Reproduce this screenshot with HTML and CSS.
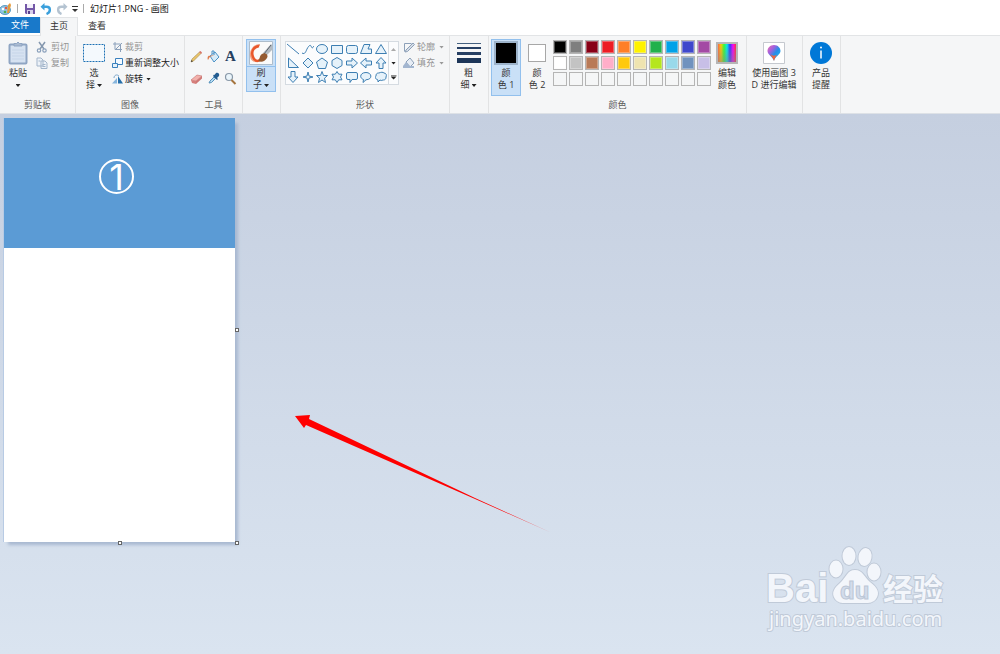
FILE: index.html
```html
<!DOCTYPE html>
<html lang="zh-CN">
<head>
<meta charset="utf-8">
<title>幻灯片1.PNG - 画图</title>
<link rel="stylesheet" href="styles.css">
</head>
<body>
<div class="app">
  <header class="titlebar">
    <svg class="app-icon" width="12" height="14" viewBox="0 0 12 14"><ellipse cx="5" cy="8" rx="5.500" ry="4.500" fill="#8fc3e2" stroke="#5c9cc5"/><circle cx="3" cy="7" r="1.200" fill="#fff"/><circle cx="5" cy="10" r="1.300" fill="#4caf50"/><circle cx="6" cy="6" r="1.200" fill="#e25545"/><path d="M7 11 8 3l2-2 1 2-2 8z" fill="#e59a3c"/></svg>
    <span class="bar"></span>
    <button class="quick" aria-label="保存"><svg width="12" height="12" viewBox="0 0 12 12"><path d="M1 1h10v10H2L1 10z" fill="#7458a8"/><path d="M3 1h6v4H3z" fill="#f3f0fa"/><path d="M3 7h6v4H3z" fill="#d8d0ea"/><path d="M4 8h2v3H4z" fill="#59408d"/></svg></button>
    <button class="quick" aria-label="撤销"><svg width="12" height="12" viewBox="0 0 12 12"><path d="M4.500 0v7.500L.5 3.800z" fill="#3ba0dc"/><path d="M3 3.800h3.500c4.500 0 4.500 5.500 0 7.200" fill="none" stroke="#3ba0dc" stroke-width="2.400"/></svg></button>
    <button class="quick" aria-label="重做"><svg width="12" height="12" viewBox="0 0 12 12"><path d="M7.500 0v7.500l4-3.700z" fill="#b4c3d1"/><path d="M9 3.800H5.500C1 3.800 1 9.300 5.500 11" fill="none" stroke="#b4c3d1" stroke-width="2.400"/></svg></button>
    <button class="quick narrow" aria-label="自定义"><svg width="6" height="7" viewBox="0 0 6 7"><path d="M0 1.500h6" stroke="#333"/><path d="M0 4h6L3 7z" fill="#333"/></svg></button>
    <span class="bar"></span>
    <h1 class="title">幻灯片1.PNG - 画图</h1>
  </header>
  <nav class="tabs">
    <button class="tab file">文件</button>
    <button class="tab active">主页</button>
    <button class="tab">查看</button>
  </nav>
  <section class="ribbon">
    <div class="group">
      <div class="body">
        <button class="large"><span class="pic"><svg width="20" height="24" viewBox="0 0 20 24"><rect x="1.500" y="3.500" width="17" height="19" rx="1" fill="#d6e2f1" stroke="#8fa5c3" stroke-width="2"/><path d="M6 5V2.500h2.500L10 1l1.500 1.500H14V5z" fill="#a9bad1" stroke="#8fa5c3"/><path d="M4 9h12M4 12h12M4 15h12M4 18h12" stroke="#c6d5e8"/></svg></span>粘贴<i class="caret"></i></button>
        <div class="stack clip">
          <button class="small off"><svg width="12" height="12" viewBox="0 0 12 12"><path d="M3 1 8 8M9 1 4 8" stroke="#8497ae" stroke-width="1.500"/><circle cx="3" cy="9.500" r="1.700" fill="none" stroke="#8aa0bb" stroke-width="1.200"/><circle cx="8.500" cy="9.500" r="1.700" fill="none" stroke="#8aa0bb" stroke-width="1.200"/></svg>剪切</button>
          <button class="small off"><svg width="12" height="12" viewBox="0 0 12 12"><path d="M1 1h4l2 2v6H1zM5 4h4l2 2v5.500H5z" fill="#edf2f8" stroke="#a3b5ca"/><path d="M6.500 7.500h3M6.500 9.500h3M2.500 4h2" stroke="#a3b5ca"/></svg>复制</button>
        </div>
      </div>
      <div class="label">剪贴板</div>
    </div>
    <div class="group">
      <div class="body">
        <button class="large"><span class="pic"><svg width="22" height="18" viewBox="0 0 22 18"><rect x=".5" y=".5" width="21" height="17" fill="#f4f9fd" stroke="#1c70b4" stroke-dasharray="2 1"/></svg></span>选<span>择<i class="caret"></i></span></button>
        <div class="stack">
          <button class="small off"><svg width="12" height="12" viewBox="0 0 12 12"><path d="M3 1v7.500h7M1 3h7.500V11M4 8l6-6" fill="none" stroke="#8ba0ba"/></svg>裁剪</button>
          <button class="small"><svg width="12" height="12" viewBox="0 0 12 12"><path d="M3.500 1.500h7v6h-7z" fill="#f5faff" stroke="#3a80bd"/><path d="M.5 6.500h5v4h-5z" fill="#e4f1fb" stroke="#3a80bd"/></svg>重新调整大小</button>
          <button class="small"><svg width="12" height="12" viewBox="0 0 12 12"><path d="M0 10.500 5 5v5.500z" fill="#86b5dd"/><path d="M6 3v7.500h5z" fill="#246eaa"/><path d="M2 5c0-3 3-4 5-2" fill="none" stroke="#7ca7cb"/></svg>旋转<i class="caret"></i></button>
        </div>
      </div>
      <div class="label">图像</div>
    </div>
    <div class="group">
      <div class="body tools">
        <button aria-label="铅笔"><svg width="13" height="13" viewBox="0 0 13 13"><path d="m1 12 1-3 7.500-7 1.500 1.500L3.500 11z" fill="#e9c46a" stroke="#a38a52" stroke-width=".6"/><path d="m9 2 1.500-1L12 2.500 11 4z" fill="#d9746a"/><path d="m1 12 .6-2L3 11.300z" fill="#333"/></svg></button>
        <button aria-label="填充"><svg width="13" height="13" viewBox="0 0 13 13"><path d="m3 6 5-4 4 5-5 5z" fill="#d7ebf8" stroke="#4a91c6"/><path d="M3 6C1 5 0 8 1 10c1-1 1-3 3-3.500l4-2z" fill="#dd7a4b"/><path d="M5 4V1h2v4" fill="none" stroke="#4a91c6"/></svg></button>
        <button class="letter" aria-label="文本">A</button>
        <button aria-label="橡皮擦"><svg width="13" height="13" viewBox="0 0 13 13"><path d="m1 8 6-5 5 1-6 5z" fill="#f2b0ab" stroke="#c6736f" stroke-width=".6"/><path d="m1 8 5 1v3l-4-1z" fill="#d67f7c"/><path d="m6 9 6-5v2.500L6 12z" fill="#cf7875"/></svg></button>
        <button aria-label="颜色选取器"><svg width="13" height="13" viewBox="0 0 13 13"><path d="m2 11 1-2 4-4 1.500 1.500-4 4z" fill="#b6dcf2" stroke="#5692bc"/><path d="m6 4 4 4 1-1-1-1 2-2c1-2-1-4-3-3L7.500 3 7 2.500z" fill="#245d91"/></svg></button>
        <button aria-label="放大镜"><svg width="13" height="13" viewBox="0 0 13 13"><circle cx="5" cy="5" r="3.500" fill="#eaf5fb" stroke="#8898a8" stroke-width="1.200"/><path d="m7.500 8 4 4" stroke="#a4743f" stroke-width="2"/></svg></button>
      </div>
      <div class="label">工具</div>
    </div>
    <div class="group">
      <div class="body brush">
        <button class="large selected split"><span class="pic"><svg width="24" height="24" viewBox="0 0 24 24"><path d="M.5.5h23v23H.5z" fill="#fafafa" stroke="#aebdcb"/><path d="M11 4C5 4 1 10 2 15c1 6 7 7 11 2" fill="none" stroke="#f0a184" stroke-width="2"/><path d="M10 5C4 6 2 11 4 16c2 5 6 5 9 1" fill="none" stroke="#e9572b" stroke-width="2.500"/><path d="m14 12 8-9 1 1v5l-6 6z" fill="#b4bbc2"/><path d="m22 4-7 9" stroke="#5d656d"/><path d="M9 20c2-1 1-5 4-7s7 1 5 4-5 5-9 3z" fill="#955b32"/></svg></span>刷<span>子<i class="caret"></i></span></button>
      </div>
    </div>
    <div class="group">
      <div class="body shapes">
        <div class="gallery">
          <div class="grid">
            <button aria-label="直线"><svg viewBox="0 0 12 12"><path d="m0 1 12 10"/></svg></button>
            <button aria-label="曲线"><svg viewBox="0 0 12 12"><path fill="none" d="M0 10c3 2 4-2 5-4s3-5 4-3 1 3 3 0"/></svg></button>
            <button aria-label="椭圆"><svg viewBox="0 0 12 12"><ellipse cx="6" cy="6" rx="5.500" ry="4.500"/></svg></button>
            <button aria-label="矩形"><svg viewBox="0 0 12 12"><path d="M.5 2.500h11v8H.5z"/></svg></button>
            <button aria-label="圆角矩形"><svg viewBox="0 0 12 12"><rect x=".5" y="2.500" width="11" height="8" rx="2"/></svg></button>
            <button aria-label="多边形"><svg viewBox="0 0 12 12"><path d="M.5 10.500 4 1.500h6L8 6h3.500v4.500z"/></svg></button>
            <button aria-label="三角形"><svg viewBox="0 0 12 12"><path d="m6 1.500 5.500 9H.5z"/></svg></button>
            <button aria-label="直角三角形"><svg viewBox="0 0 12 12"><path d="M1.500 1v9.500h10z"/></svg></button>
            <button aria-label="菱形"><svg viewBox="0 0 12 12"><path d="m6 1 5 5-5 5-5-5z"/></svg></button>
            <button aria-label="五边形"><svg viewBox="0 0 12 12"><path d="m6 1 5.500 4-2 6.500h-7L.5 5z"/></svg></button>
            <button aria-label="六边形"><svg viewBox="0 0 12 12"><path d="m6 .5 5 3v5l-5 3-5-3v-5z"/></svg></button>
            <button aria-label="右箭头"><svg viewBox="0 0 12 12"><path d="M.5 4H6V1l5.500 5L6 11V8H.5z"/></svg></button>
            <button aria-label="左箭头"><svg viewBox="0 0 12 12"><path d="M11.500 4H6V1L.5 6 6 11V8h5.500z"/></svg></button>
            <button aria-label="上箭头"><svg viewBox="0 0 12 12"><path d="M4 11.500V6H1L6 .5 11 6H8v5.500z"/></svg></button>
            <button aria-label="下箭头"><svg viewBox="0 0 12 12"><path d="M4 .5V6H1l5 5.500L11 6H8V.5z"/></svg></button>
            <button aria-label="四角星"><svg viewBox="0 0 12 12"><path d="m6 1 1 4 4 1-4 1-1 4-1-4-4-1 4-1z"/></svg></button>
            <button aria-label="五角星"><svg viewBox="0 0 12 12"><path d="m6 .5 1.500 4h4l-3 2.700 1 4.300L6 9l-3.500 2.500 1-4.300-3-2.700h4z"/></svg></button>
            <button aria-label="六角星"><svg viewBox="0 0 12 12"><path d="m6 .5 1.700 2.700H11L9.500 6 11 8.800H7.700L6 11.500 4.300 8.800H1L2.500 6 1 3.200h3.300z"/></svg></button>
            <button aria-label="圆角标注"><svg viewBox="0 0 12 12"><path d="M2 1.500h8q1.500 0 1.500 1.500v4q0 1.500-1.500 1.500H6l-2 3v-3H2Q.5 8.500.5 7V3Q.5 1.500 2 1.500z"/></svg></button>
            <button aria-label="椭圆标注"><svg viewBox="0 0 12 12"><path d="M3.500 8.500C-1 7 0 1.500 6 1.500s7 7 0 7.300L3 11.500z"/></svg></button>
            <button aria-label="云形标注"><svg viewBox="0 0 12 12"><path d="M3 9C0 8 0 6 1 5c0-3 2-3 3-3 2-1 4-1 5 0 2 0 3 2 2 4 0 3-2 3-3 3q-2 1-3 0l-2 2z"/></svg></button>
          </div>
          <div class="scroll">
            <button aria-label="向上"><i class="caret up"></i></button>
            <button aria-label="向下"><i class="caret"></i></button>
            <button aria-label="更多"><i class="caret more"></i></button>
          </div>
        </div>
        <div class="stack outline">
          <button class="small off"><svg width="12" height="12" viewBox="0 0 12 12"><path d="M1.500 10.500v-8h7" fill="none" stroke="#8ca0b8"/><path d="m3 9 7-7 1.500 1.500-7 7L2 11z" fill="#d6dde6" stroke="#8ca0b8"/></svg>轮廓<i class="caret"></i></button>
          <button class="small off"><svg width="12" height="12" viewBox="0 0 12 12"><path d="m3 5 4-4 4 5-4 4z" fill="#e7edf5" stroke="#8ca0b8"/><path d="M3 5 0 9v2h11V9H7L4 6z" fill="#a3b6d0"/></svg>填充<i class="caret"></i></button>
        </div>
      </div>
      <div class="label">形状</div>
    </div>
    <div class="group">
      <div class="body brush">
        <button class="large wide"><span class="pic"><svg width="24" height="22" viewBox="0 0 24 22"><path d="M0 1.500h24" stroke="#44607f"/><path d="M0 6h24" stroke="#263f63" stroke-width="2"/><path d="M0 11.500h24" stroke="#263f63" stroke-width="3"/><path d="M0 18.500h24" stroke="#1c3558" stroke-width="5"/></svg></span>粗<span>细<i class="caret"></i></span></button>
      </div>
    </div>
    <div class="group">
      <div class="body colors">
        <button class="large selected tall"><span class="pic"><span class="chip black"></span></span>颜<span>色 1</span></button>
        <button class="large"><span class="pic"><span class="chip"></span></span>颜<span>色 2</span></button>
        <div class="palette">
          <button class="swatch" style="background:#000000" aria-label="黑色"></button><button class="swatch" style="background:#7f7f7f" aria-label="灰色-50%"></button><button class="swatch" style="background:#880015" aria-label="深红色"></button><button class="swatch" style="background:#ed1c24" aria-label="红色"></button><button class="swatch" style="background:#ff7f27" aria-label="橙色"></button><button class="swatch" style="background:#fff200" aria-label="黄色"></button><button class="swatch" style="background:#22b14c" aria-label="绿色"></button><button class="swatch" style="background:#00a2e8" aria-label="青绿色"></button><button class="swatch" style="background:#3f48cc" aria-label="靛蓝色"></button><button class="swatch" style="background:#a349a4" aria-label="紫色"></button>
          <button class="swatch" style="background:#ffffff" aria-label="白色"></button><button class="swatch" style="background:#c3c3c3" aria-label="灰色-25%"></button><button class="swatch" style="background:#b97a57" aria-label="褐色"></button><button class="swatch" style="background:#ffaec9" aria-label="玫瑰色"></button><button class="swatch" style="background:#ffc90e" aria-label="金色"></button><button class="swatch" style="background:#efe4b0" aria-label="浅黄色"></button><button class="swatch" style="background:#b5e61d" aria-label="酸橙色"></button><button class="swatch" style="background:#99d9ea" aria-label="淡青绿色"></button><button class="swatch" style="background:#7092be" aria-label="蓝灰色"></button><button class="swatch" style="background:#c8bfe7" aria-label="淡紫色"></button>
          <button class="swatch" aria-label="自定义 1"></button><button class="swatch" aria-label="自定义 2"></button><button class="swatch" aria-label="自定义 3"></button><button class="swatch" aria-label="自定义 4"></button><button class="swatch" aria-label="自定义 5"></button><button class="swatch" aria-label="自定义 6"></button><button class="swatch" aria-label="自定义 7"></button><button class="swatch" aria-label="自定义 8"></button><button class="swatch" aria-label="自定义 9"></button><button class="swatch" aria-label="自定义 10"></button>
        </div>
        <button class="large"><span class="pic"><span class="spectrum"></span></span>编辑<span>颜色</span></button>
      </div>
      <div class="label">颜色</div>
    </div>
    <div class="group">
      <div class="body brush">
        <button class="large extra"><span class="pic"><svg width="22" height="22" viewBox="0 0 22 22"><defs><linearGradient id="drop" x1="0" y1="0" x2="1" y2="1"><stop offset="0" stop-color="#ee6fb0"/><stop offset=".3" stop-color="#a660dc"/><stop offset=".55" stop-color="#268ee8"/><stop offset="1" stop-color="#20c4ec"/></linearGradient></defs><path d="M.5.5h21v21H.5z" fill="#fff" stroke="#c5c9cf"/><path d="M11 3c-4 0-6.500 3-6.500 6 0 4 5 5 6.500 10 1-5 6.500-6 6.500-10 0-3-2.500-6-6.500-6z" fill="url(#drop)"/><path d="M7 12c2 2 4 2 7 1-2 2-2 3-3 6-1-3-2-4-4-7z" fill="#f4643c"/></svg></span>使用画图 3<span>D 进行编辑</span></button>
      </div>
    </div>
    <div class="group">
      <div class="body brush">
        <button class="large"><span class="pic"><svg width="22" height="22" viewBox="0 0 22 22"><circle cx="11" cy="11" r="11" fill="#0078d7"/><path d="M11 8.500v8" stroke="#fff" stroke-width="1.500"/><circle cx="11" cy="5.500" r="1" fill="#fff"/></svg></span>产品<span>提醒</span></button>
      </div>
    </div>
  </section>
  <main class="workspace">
    <div class="paper">
      <div class="banner"><span class="number">1</span></div>
      <span class="handle right"></span>
      <span class="handle bottom"></span>
      <span class="handle corner"></span>
    </div>
    <svg class="arrow" width="258" height="120" viewBox="0 0 258 120"><defs><linearGradient id="tail" gradientUnits="userSpaceOnUse" x1="220" y1="0" x2="258" y2="0"><stop offset="0" stop-color="#f00"/><stop offset="1" stop-color="#f00" stop-opacity=".5"/></linearGradient></defs><path d="M0 1 15 0l-1 4L180 83l77 35-77-34L11 10l-2 3z" fill="url(#tail)"/></svg>
    <svg class="watermark" width="190" height="90" viewBox="0 0 190 90">
      <g class="ink">
        <text class="wm-brand" x="3" y="59">Bai</text>
        <ellipse cx="73" cy="26" rx="6.500" ry="8.500"/><ellipse cx="86" cy="13" rx="6.500" ry="9"/><ellipse cx="102" cy="14" rx="6.500" ry="9" transform="rotate(10 102 14)"/><ellipse cx="111" cy="29" rx="6.500" ry="8.500"/>
        <path d="M92 27c8 0 9 7 15 12 8 6 10 11 6 17-4 5-9 4-21 4s-16 1-20-4c-4-6-1-11 5-16s7-13 15-13z"/>
        <text class="wm-cjk" x="120" y="57">经验</text>
        <text class="wm-site" x="6" y="83">jingyan.baidu.com</text>
      </g>
      <text class="wm-du" x="77" y="56">du</text>
    </svg>
  </main>
</div>
</body>
</html>
```
FILE: styles.css
```css
* { box-sizing: border-box; }
body {
  margin: 0;
  color: #333;
  font: 9px/12px "Open Sans", "Noto Sans CJK SC", sans-serif;
}
button {
  margin: 0;
  padding: 0;
  border: 0;
  background: none;
  color: inherit;
  font: inherit;
}
svg { display: block; flex: none; }
.app { display: flex; flex-direction: column; min-height: 100vh; }

.titlebar { display: flex; align-items: center; gap: 4px; height: 17px; background: #fff; }
.bar { width: 1px; height: 9px; margin: 0 2px 0 1px; background: #aaa; }
.quick { width: 12px; }
.quick.narrow { width: 6px; }
.title { margin: 0; font-size: 9px; line-height: 12px; font-weight: 400; color: #111; }

.tabs { display: flex; height: 19px; background: #fff; border-bottom: 1px solid #e2e4e6; }
.tab { width: 38px; height: 18px; line-height: 16px; }
.tab.file { width: 40px; height: 16px; line-height: 16px; background: #1979ca; color: #fff; }
.tab.active { height: 19px; line-height: 14px; padding-bottom: 2px; background: #f5f6f7; border: 1px solid #e2e4e6; border-bottom: 0; }

.ribbon { display: flex; height: 78px; background: #f5f6f7; border-bottom: 1px solid #dde1e6; }
.group { display: flex; flex-direction: column; border-right: 1px solid #e2e3e4; }
.body { display: flex; flex: 1; align-items: flex-start; gap: 3px; padding: 3px 5px 0 3px; }
.body.brush { padding: 3px 4px 0 3px; }
.label { height: 17px; line-height: 17px; text-align: center; color: #5a5a5a; }

.large { display: flex; flex-direction: column; align-items: center; width: 30px; height: 53px; }
.large.wide { width: 31px; }
.large.extra { width: 48px; }
.large.tall { height: 57px; }
.large.selected { background: #c9e0f7; box-shadow: inset 0 0 0 1px #92c0ed; }
.pic { display: flex; align-items: center; justify-content: center; width: 100%; height: 28px; }
.split .pic { border-bottom: 1px solid #92c0ed; }
.caret {
  display: inline-block;
  width: 5px;
  height: 3px;
  margin-left: 2px;
  vertical-align: middle;
  background: #222;
  clip-path: polygon(0 0, 100% 0, 50% 100%);
}
.large > .caret { margin: 5px 0 0; }
.stack { display: flex; flex-direction: column; }
.stack.clip { padding-right: 1px; }
.small { display: flex; align-items: center; gap: 1px; height: 16px; white-space: nowrap; color: #222; }
.clip .small { gap: 3px; }
.small.off { color: #949494; }
.off .caret { margin-left: 2px; background: #999; }

.body.tools { display: grid; grid-template-columns: repeat(3, 17px); grid-auto-rows: 22px; gap: 0; padding: 9px 3px 0; }
.tools button { display: grid; place-items: center; height: 22px; }
.tools .letter { color: #24405f; font: bold 15px/22px "Liberation Serif", serif; }

.body.shapes { gap: 4px; padding-top: 5px; padding-left: 4px; }
.shapes .stack { margin-top: -2px; }
.outline .small { gap: 2px; }
.gallery { display: flex; border: 1px solid #d5dbe1; background: #fbfcfd; }
.grid { display: grid; grid-template-columns: repeat(7, 1fr); grid-auto-rows: 14px; width: 102px; }
.grid button { display: grid; place-items: center; }
.grid svg { width: 12px; height: 12px; fill: #e6f2fa; stroke: #3c7eb2; stroke-width: 1; }
.scroll { display: flex; flex-direction: column; width: 10px; border-left: 1px solid #d5dbe1; }
.scroll button { display: grid; flex: 1; place-items: center; }
.scroll .caret { margin: 0; }
.scroll .up { transform: rotate(180deg); background: #aaa; }
.scroll .more { height: 5px; width: 6px; clip-path: polygon(0 0, 100% 0, 100% 20%, 0 20%, 0 40%, 100% 40%, 50% 100%, 0 40%); }

.body.colors { gap: 1px; padding-left: 2px; padding-right: 4px; }
.chip { width: 18px; height: 18px; border: 1px solid #a7a7a7; background: #fff; }
.chip.black { width: 24px; height: 24px; border: 2px solid #9db3ca; background: #000; }
.palette { display: grid; grid-template-columns: repeat(10, 14px); gap: 2px; padding-top: 1px; }
.swatch { width: 14px; height: 14px; border: 1px solid #b5b5b5; box-shadow: inset 0 0 0 1px #f5f6f755; }
.spectrum {
  width: 22px;
  height: 22px;
  border: 2px solid #b6b6b6;
  background: linear-gradient(transparent, #8888), linear-gradient(90deg, #f64, #fc0, #3f3, #0ee, #33f, #f0f, #f33);
}

.workspace {
  position: relative;
  flex: 1;
  padding: 4px 3px 0;
  background: linear-gradient(#c5cfe0, #dae4f0);
}
.paper {
  position: relative;
  width: 232px;
  height: 424px;
  background: #fff;
  border-left: 1px solid #b8cbe4;
  box-shadow: 4px 4px 3px -1px #a9b9d1;
}
.banner { display: flex; align-items: center; justify-content: center; height: 130px; padding-bottom: 14px; background: #5b9bd5; }
.number {
  width: 35px;
  height: 35px;
  margin-right: 6px;
  border: 2px solid #fff;
  border-radius: 50%;
  color: #fff;
  font: 36px/32px Inter, sans-serif;
  text-align: center;
}
.handle { position: absolute; width: 4px; height: 4px; border: 1px solid #666; background: #fff; }
.handle.right { right: -4px; top: 50%; transform: translateY(-50%); }
.handle.bottom { bottom: -3px; left: 50%; transform: translateX(-50%); }
.handle.corner { right: -4px; bottom: -3px; }

.arrow { position: absolute; left: 295px; top: 301px; }
.watermark { position: absolute; right: 47px; bottom: 21px; }
.ink { fill: #f3f6fb; stroke: #c0cad8; stroke-width: 2; paint-order: stroke; }
.wm-brand { font: bold 40px "Liberation Sans", sans-serif; }
.wm-cjk { font: bold 30px "Noto Sans CJK SC", sans-serif; }
.wm-site { font: 20px "Noto Sans", sans-serif; }
.wm-du { fill: #d3dceb; stroke: #bcc7d6; stroke-width: 1; font: bold 24px "Liberation Sans", sans-serif; }
```
